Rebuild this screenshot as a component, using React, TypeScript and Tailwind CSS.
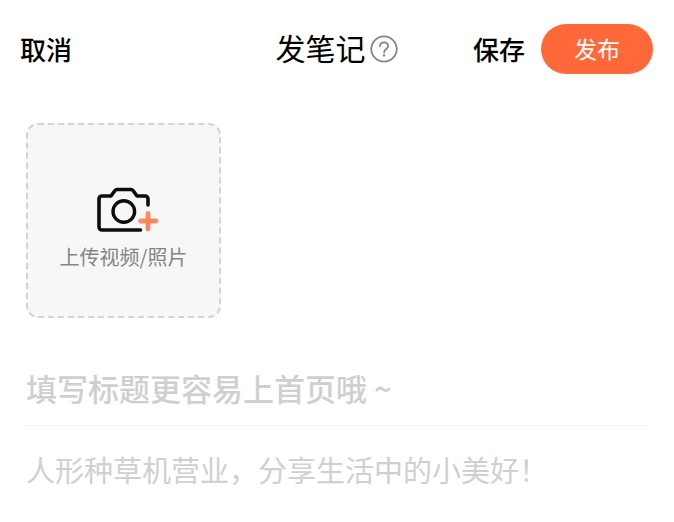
import { useState } from "react"

function CameraPlusIcon() {
  return (
    <svg width="64" height="48" viewBox="0 0 64 48" fill="none" aria-hidden>
      <defs>
        <linearGradient id="plus" x1="42" y1="26" x2="62" y2="46" gradientUnits="userSpaceOnUse">
          <stop stopColor="#ffa273" />
          <stop offset="0.5" stopColor="#f88258" />
          <stop offset="1" stopColor="#fb9a74" />
        </linearGradient>
      </defs>
      <path
        d="M44.5 44H6a3 3 0 0 1-3-3V13a3 3 0 0 1 3-3h9l4-5.5a2.5 2.5 0 0 1 2-1h14a2.5 2.5 0 0 1 2 1L41 10H49a3 3 0 0 1 3 3v6"
        stroke="#0c0c0c"
        strokeWidth="3.6"
        strokeLinecap="round"
        strokeLinejoin="round"
      />
      <circle cx="27.8" cy="25.5" r="10.8" stroke="#0c0c0c" strokeWidth="3.4" />
      <path d="M52 27.5v15.500M44.500 35h15.500" stroke="url(#plus)" strokeWidth="4.8" strokeLinecap="round" />
    </svg>
  )
}

function HelpIcon() {
  return (
    <svg width="28" height="28" viewBox="0 0 28 28" fill="none" stroke="#858585" aria-hidden>
      <circle cx="14" cy="14" r="12.7" strokeWidth="1.8" />
      <path
        d="M10 11.2c0-2.3 1.7-3.9 4.1-3.9s4 1.5 4 3.6c0 1.6-.9 2.4-2.1 3.3-1.3 1-1.9 1.6-1.9 3.2"
        strokeWidth="1.8"
        strokeLinecap="round"
      />
      <circle cx="14.1" cy="20.4" r="1.2" fill="#858585" stroke="none" />
    </svg>
  )
}

export default function App() {
  const [title, setTitle] = useState("")
  const [body, setBody] = useState("")

  return (
    <div className="min-h-screen bg-white font-['Noto_Sans_CJK_SC',sans-serif] text-black">
      <header className="grid grid-cols-[1fr_auto_1fr] items-center pt-6 pr-[21px] pl-5">
        <button type="button" className="justify-self-start text-[26px] leading-[50px] font-medium">
          取消
        </button>
        <div className="flex items-center gap-1">
          <h1 className="pb-1 text-[30px] leading-[46px] font-normal">发笔记</h1>
          <button type="button" aria-label="帮助">
            <HelpIcon />
          </button>
        </div>
        <div className="flex items-center gap-4 justify-self-end">
          <button type="button" className="text-[26px] leading-[50px] font-medium">
            保存
          </button>
          <button
            type="button"
            className="rounded-full bg-[#ff6839] px-[33px] pb-0.5 text-[23px] leading-[48px] font-normal text-white"
          >
            发布
          </button>
        </div>
      </header>

      <main className="px-[26px] pt-[49px]">
        <button
          type="button"
          className="flex size-[195px] flex-col items-center justify-center gap-2 rounded-xl border-2 border-dashed border-[#d3d3d3] bg-[#f7f7f7] pt-4"
        >
          <span className="pl-2">
            <CameraPlusIcon />
          </span>
          <span className="text-[20px] leading-[30px] font-normal whitespace-nowrap text-[#858585]">
            上传视频/照片
          </span>
        </button>

        <input
          type="text"
          aria-label="标题"
          value={title}
          onChange={(e) => setTitle(e.target.value)}
          placeholder="填写标题更容易上首页哦 ~"
          className="mt-9 block h-[72px] w-full border-b border-[#f0f0f0] pb-1 text-[31px] font-medium outline-none placeholder:text-[#cfcfcf]"
        />
        <textarea
          aria-label="正文"
          rows={1}
          value={body}
          onChange={(e) => setBody(e.target.value)}
          placeholder="人形种草机营业，分享生活中的小美好！"
          className="mt-5 block w-full resize-none overflow-hidden text-[29px] leading-[46px] font-normal outline-none placeholder:text-[#d0d0d0]"
        />
      </main>
    </div>
  )
}
